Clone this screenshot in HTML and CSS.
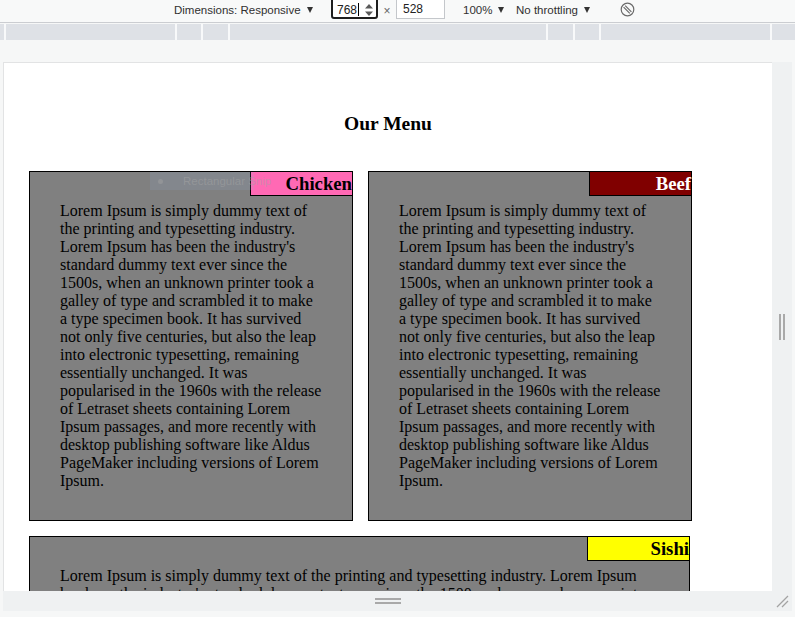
FILE: index.html
```html
<!DOCTYPE html>
<html lang="en">
<head>
<meta charset="utf-8">
<title>Our Menu</title>
<link rel="stylesheet" href="styles.css">
</head>
<body>
<header class="toolbar">
  <span class="tb-item dims">Dimensions: Responsive <i class="caret"></i></span>
  <span class="input focused"><span class="val">768</span><span class="cursor"></span>
    <svg class="spin" width="10" height="14" viewBox="0 0 10 14"><path d="M5 1 L9 5.5 H1 Z M5 13 L9 8.5 H1 Z" fill="#5a5a5a"/></svg>
  </span>
  <span class="times">×</span>
  <span class="input plain">528</span>
  <span class="tb-item zoom">100% <i class="caret"></i></span>
  <span class="tb-item throttle">No throttling <i class="caret"></i></span>
  <svg class="rotate" width="15" height="15" viewBox="0 0 15 15"><circle cx="7.5" cy="7.5" r="6.3" fill="none" stroke="#6a6a6a" stroke-width="1.2"/><path d="M3.6 5.2 L9.8 11.4 M5.2 3.6 L11.4 9.8" stroke="#6a6a6a" stroke-width="1.2" fill="none"/></svg>
</header>
<div class="ruler">
  <i class="r1"></i><i class="r2"></i><i class="r3"></i><i class="r4"></i><i class="r5"></i><i class="r6"></i><i class="r7"></i><i class="r8"></i><i class="r9"></i>
</div>
<div class="device">
  <div class="viewport">
    <h3 class="title">Our Menu</h3>
    <div class="menu">
      <article class="card">
        <h4 class="label chicken">Chicken</h4>
        <p>Lorem Ipsum is simply dummy text of the printing and typesetting industry. Lorem Ipsum has been the industry's standard dummy text ever since the 1500s, when an unknown printer took a galley of type and scrambled it to make a type specimen book. It has survived not only five centuries, but also the leap into electronic typesetting, remaining essentially unchanged. It was popularised in the 1960s with the release of Letraset sheets containing Lorem Ipsum passages, and more recently with desktop publishing software like Aldus PageMaker including versions of Lorem Ipsum.</p>
      </article>
      <article class="card">
        <h4 class="label beef">Beef</h4>
        <p>Lorem Ipsum is simply dummy text of the printing and typesetting industry. Lorem Ipsum has been the industry's standard dummy text ever since the 1500s, when an unknown printer took a galley of type and scrambled it to make a type specimen book. It has survived not only five centuries, but also the leap into electronic typesetting, remaining essentially unchanged. It was popularised in the 1960s with the release of Letraset sheets containing Lorem Ipsum passages, and more recently with desktop publishing software like Aldus PageMaker including versions of Lorem Ipsum.</p>
      </article>
      <article class="card wide">
        <h4 class="label sishi">Sishi</h4>
        <p>Lorem Ipsum is simply dummy text of the printing and typesetting industry. Lorem Ipsum has been the industry's standard dummy text ever since the 1500s, when an unknown printer took a galley of type and scrambled it to make a type specimen book. It has survived not only five centuries, but also the leap into electronic typesetting, remaining essentially unchanged. It was popularised in the 1960s with the release of Letraset sheets containing Lorem Ipsum passages, and more recently with desktop publishing software like Aldus PageMaker including versions of Lorem Ipsum.</p>
      </article>
    </div>
    <div class="snip"><i class="dot"></i><span>Rectangular Snip</span></div>
  </div>
  <div class="side-handle"><span></span><span></span></div>
  <div class="bottom-handle"><span></span><span></span></div>
  <div class="corner">
    <svg width="20" height="20" viewBox="0 0 20 20"><path d="M5 16 L16 5 M10 16 L16 10" stroke="#a3a3a3" stroke-width="1.3" fill="none"/></svg>
  </div>
</div>
</body>
</html>
```
FILE: styles.css
```css
html, body {
  margin: 0;
  padding: 0;
}
body {
  width: 795px;
  height: 617px;
  overflow: hidden;
  background: #f6f7f7;
  font-family: "Liberation Sans", Arial, sans-serif;
}

/* ---------- toolbar ---------- */
.toolbar {
  display: flex;
  align-items: flex-start;
  height: 22px;
  padding-left: 174px;
  border-bottom: 1px solid #cbcdd1;
  background: #f8f9f9;
}
.tb-item {
  display: flex;
  align-items: center;
  gap: 6px;
  height: 14px;
  margin-top: 3px;
  font-size: 11.5px;
  color: #303030;
  white-space: nowrap;
  flex: none;
}
.caret {
  display: block;
  width: 0;
  height: 0;
  border-left: 3px solid transparent;
  border-right: 3px solid transparent;
  border-top: 6px solid #333;
}
.dims { width: 157px; }
.zoom { width: 53px; margin-left: 18px; }
.throttle { width: 104px; }
.input {
  box-sizing: border-box;
  display: flex;
  align-items: center;
  height: 21px;
  margin-top: -2px;
  padding-top: 2px;
  font-size: 12px;
  color: #222;
  background: #fff;
  flex: none;
}
.input.focused {
  width: 47px;
  border: 2px solid #1e1e1e;
  border-radius: 0 0 3px 3px;
  padding-left: 4px;
}
.cursor {
  display: block;
  width: 1px;
  height: 13px;
  background: #000;
  margin-left: 1px;
}
.spin { margin-left: 5px; }
.input.plain {
  width: 49px;
  border: 1px solid #c4c7cb;
  border-top: none;
  padding-left: 6px;
}
.times {
  width: 18px;
  margin-top: 4px;
  text-align: center;
  font-size: 12px;
  color: #666;
  flex: none;
}
.rotate {
  margin-top: 2px;
  flex: none;
}

/* ---------- ruler ---------- */
.ruler {
  display: flex;
  gap: 2px;
  height: 16px;
  margin-top: 1px;
  background: #f8f9fa;
}
.ruler i { display: block; background: #dee1e6; flex: none; }
.r1 { width: 4px; }
.r2 { width: 169px; }
.r3 { width: 24px; }
.r4 { width: 25px; }
.r5 { width: 316px; }
.r6 { width: 25px; }
.r7 { width: 24px; }
.r8 { width: 169px; }
.r9 { width: 23px; }

/* ---------- device frame ---------- */
.device {
  display: grid;
  grid-template-columns: 769px 20px;
  grid-template-rows: 529px 20px;
  margin: 22px 0 0 3px;
}
.viewport {
  position: relative;
  overflow: hidden;
  background: #fff;
  border-top: 1px solid #e2e3e4;
  border-left: 1px solid #e2e3e4;
}
.side-handle {
  display: flex;
  justify-content: center;
  align-items: center;
  gap: 2px;
  background: #eff1f2;
}
.side-handle span {
  display: block;
  width: 2px;
  height: 26px;
  background: #a9a9a9;
}
.bottom-handle {
  display: flex;
  flex-direction: column;
  justify-content: center;
  align-items: center;
  gap: 2px;
  background: #eff1f2;
}
.bottom-handle span {
  display: block;
  width: 26px;
  height: 2px;
  background: #a9a9a9;
}
.corner {
  background: #eff1f2;
}
.corner svg { display: block; }

/* ---------- page content ---------- */
.title {
  margin: 0;
  padding-top: 49px;
  text-align: center;
  font: bold 19.5px/24px "Liberation Serif", "Times New Roman", serif;
  color: #000;
}
.menu {
  display: flex;
  flex-wrap: wrap;
  gap: 15px;
  width: 663px;
  margin: 35px 0 0 25px;
}
.card {
  position: relative;
  box-sizing: border-box;
  width: 324px;
  padding: 30px;
  border: 1px solid #000;
  background: #808080;
}
.card.wide { width: 661px; }
.card p {
  margin: 0;
  font: 16px/18px "Liberation Serif", "Times New Roman", serif;
  color: #000;
}
.label {
  position: absolute;
  top: -1px;
  right: -1px;
  box-sizing: border-box;
  width: 103px;
  height: 25px;
  margin: 0;
  border: 1px solid #000;
  text-align: right;
  white-space: nowrap;
  font: bold 18.72px/23px "Liberation Serif", "Times New Roman", serif;
}
.chicken { background: #ff69b4; color: #000; }
.beef { background: #800000; color: #fff; }
.sishi { background: #ffff00; color: #000; }

/* faint screen-snip tooltip overlay */
.snip {
  position: absolute;
  left: 146px;
  top: 109px;
  width: 104px;
  height: 18px;
  display: flex;
  align-items: center;
  background: rgba(150, 175, 220, 0.14);
  font-size: 11.5px;
  color: rgba(165, 165, 165, 0.5);
}
.snip .dot {
  display: block;
  width: 5px;
  height: 5px;
  border-radius: 50%;
  background: rgba(165, 165, 165, 0.45);
  margin: 0 20px 0 8px;
  flex: none;
}
.snip span { white-space: nowrap; }
```
